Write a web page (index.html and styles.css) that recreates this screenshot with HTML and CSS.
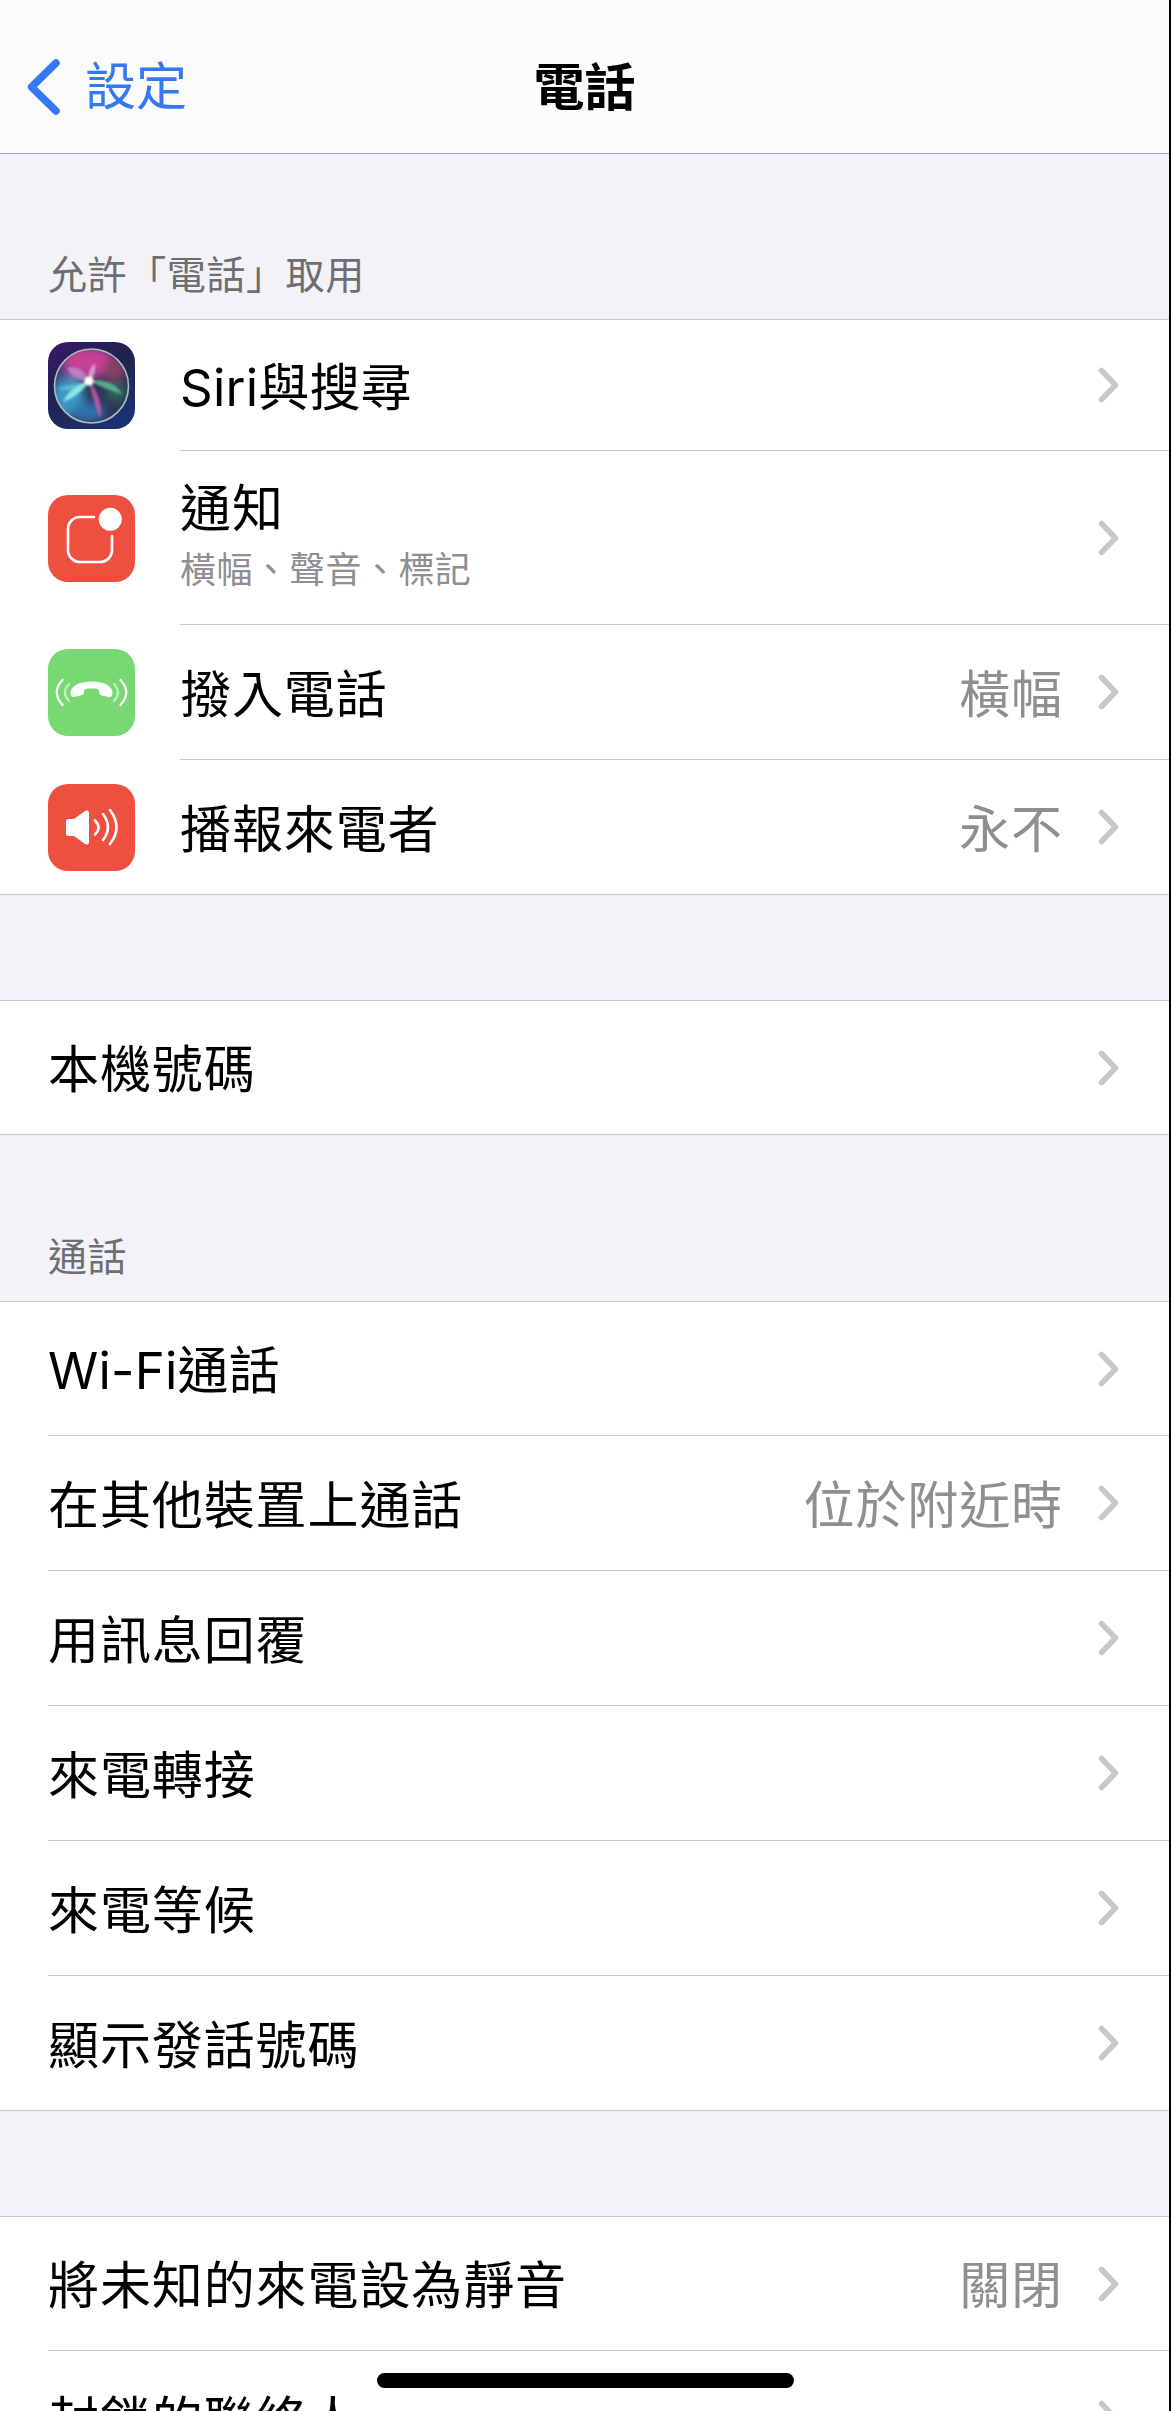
FILE: index.html
```html
<!DOCTYPE html>
<html lang="zh-Hant">
<head>
    <meta charset="UTF-8">
    <meta name="viewport" content="width=device-width, initial-scale=1.0">
    <title>電話</title>
    <link rel="stylesheet" href="styles.css">
</head>
<body>

<svg class="sprite" width="0" height="0">
    <symbol id="chevron" viewBox="0 0 21 36">
        <polyline points="3.5,3.5 17.5,18 3.5,32.5" fill="none" stroke="#c7c7cc" stroke-width="5.5" stroke-linecap="round" stroke-linejoin="round"/>
    </symbol>
</svg>

<div class="screen">
    <header class="nav">
        <a class="nav-back">
            <svg class="nav-chevron" viewBox="0 0 33 56"><polyline points="29,4 4.5,28 29,52" fill="none" stroke="#3478f6" stroke-width="7.5" stroke-linecap="round" stroke-linejoin="round"/></svg>
            <span>設定</span>
        </a>
        <h1 class="nav-title">電話</h1>
    </header>

    <div class="section-head">允許「電話」取用</div>
    <div class="group">
        <div class="row row-short">
            <svg class="row-icon" viewBox="0 0 87 87">
                <defs>
                    <linearGradient id="siriBg" x1="0" y1="0" x2="0.6" y2="1">
                        <stop offset="0" stop-color="#3b1768"/>
                        <stop offset="0.5" stop-color="#1d2350"/>
                        <stop offset="1" stop-color="#1f3070"/>
                    </linearGradient>
                    <filter id="siriBlur" x="-30%" y="-30%" width="160%" height="160%"><feGaussianBlur stdDeviation="5"/></filter>
                    <filter id="siriSoft" x="-30%" y="-30%" width="160%" height="160%"><feGaussianBlur stdDeviation="1.1"/></filter>
                    <clipPath id="siriDisc"><circle cx="43.5" cy="44" r="37"/></clipPath>
                </defs>
                <rect width="87" height="87" rx="20" fill="url(#siriBg)"/>
                <circle cx="43.5" cy="44" r="37" fill="#2b3557"/>
                <g clip-path="url(#siriDisc)" filter="url(#siriBlur)">
                    <ellipse cx="40" cy="20" rx="26" ry="16" fill="#c63f96"/>
                    <ellipse cx="66" cy="28" rx="12" ry="11" fill="#8a4060"/>
                    <ellipse cx="20" cy="54" rx="16" ry="21" fill="#3c98c4"/>
                    <ellipse cx="40" cy="70" rx="17" ry="10" fill="#3170ad"/>
                    <ellipse cx="68" cy="50" rx="10" ry="9" fill="#2f6a58"/>
                    <ellipse cx="14" cy="32" rx="6" ry="9" fill="#4a3f88"/>
                </g>
                <circle cx="43.5" cy="44" r="37" fill="none" stroke="#a9c0bd" stroke-width="1.6"/>
                <g filter="url(#siriSoft)">
                    <path d="M41 40 C30 38 23 34 19 26 C30 23 39 30 41 40Z" fill="#c49ad8" opacity="0.65"/>
                    <path d="M40 41 C28 41 18 42 9 47 C20 50 32 47 40 41Z" fill="#5ad0d8" opacity="0.6"/>
                    <path d="M41 39 C37 47 28 55 15 60 C20 49 30 42 41 39Z" fill="#8ff0e8" opacity="0.9"/>
                    <path d="M41 39 C46 36 48 30 47 21 C42 26 39 32 41 39Z" fill="#e0b0e0" opacity="0.8"/>
                    <path d="M41 39 C50 43 62 49 74 52 C68 41 54 36 41 39Z" fill="#5fbf95" opacity="0.8"/>
                    <path d="M41 40 C44 52 47 66 52 76 C55 64 50 48 41 40Z" fill="#cf5cab" opacity="0.8"/>
                    <circle cx="41" cy="39" r="4.5" fill="#ffffff"/>
                </g>
            </svg>
            <div class="row-body"><span class="row-label row-label-latin">Siri與搜尋</span><svg class="chevron"><use href="#chevron"/></svg></div>
        </div>
        <div class="row row-tall">
            <svg class="row-icon" viewBox="0 0 87 87">
                <rect width="87" height="87" rx="20" fill="#ee5040"/>
                <path d="M46 22 H32 a12 12 0 0 0 -12 12 V55 a12 12 0 0 0 12 12 H52 a12 12 0 0 0 12 -12 V41" fill="none" stroke="#fff" stroke-width="2.6" stroke-linecap="round"/>
                <circle cx="62.3" cy="24.3" r="11.5" fill="#fff"/>
            </svg>
            <div class="row-body">
                <div class="row-stack">
                    <span class="row-label">通知</span>
                    <span class="row-sub">橫幅、聲音、標記</span>
                </div>
                <svg class="chevron"><use href="#chevron"/></svg>
            </div>
        </div>
        <div class="row">
            <svg class="row-icon" viewBox="0 0 87 87">
                <rect width="87" height="87" rx="20" fill="#78d973"/>
                <path d="M22.5 44 C22 38 30 32.5 43.5 32.5 C57 32.5 65 38 64.5 44 C64.5 47 63 48.5 61 48 L54 46.5 C52 46 51 45 51 42 C51 40 49 39.5 43.5 39.5 C38 39.5 36 40 36 42 C36 45 35 46 33 46.5 L26 48 C24 48.5 22.5 47 22.5 44 Z" fill="#fff"/>
                <g fill="none" stroke="#fff" stroke-width="2.2" stroke-linecap="round">
                    <path d="M14.5 31 Q3 43.5 14.5 56"/>
                    <path d="M72.5 31 Q84 43.5 72.5 56"/>
                    <path d="M21 35 Q13 43.5 21 52" opacity="0.55"/>
                    <path d="M66 35 Q74 43.5 66 52" opacity="0.55"/>
                </g>
            </svg>
            <div class="row-body"><span class="row-label">撥入電話</span><span class="row-value">橫幅</span><svg class="chevron"><use href="#chevron"/></svg></div>
        </div>
        <div class="row row-end">
            <svg class="row-icon" viewBox="0 0 87 87">
                <rect width="87" height="87" rx="20" fill="#ee5040"/>
                <path d="M20 35 H26 L37 27 C39.5 26 41 27 41 29 V58 C41 60 39.5 61 37 60 L26 52 H20 C19 52 18 51 18 50 V37 C18 36 19 35 20 35 Z" fill="#fff"/>
                <g fill="none" stroke="#fff" stroke-width="2.6" stroke-linecap="round">
                    <path d="M47 36.5 Q54 43.5 47 50.5"/>
                    <path d="M55 30 Q65 43.5 55 56"/>
                    <path d="M62 26 Q75 43.5 62 60"/>
                </g>
            </svg>
            <div class="row-body"><span class="row-label">播報來電者</span><span class="row-value">永不</span><svg class="chevron"><use href="#chevron"/></svg></div>
        </div>
    </div>

    <div class="section-gap"></div>
    <div class="group">
        <div class="row row-single row-end row-plain">
            <div class="row-body"><span class="row-label">本機號碼</span><svg class="chevron"><use href="#chevron"/></svg></div>
        </div>
    </div>

    <div class="section-head section-head-tall">通話</div>
    <div class="group">
        <div class="row row-start row-plain">
            <div class="row-body"><span class="row-label row-label-latin">Wi-Fi通話</span><svg class="chevron"><use href="#chevron"/></svg></div>
        </div>
        <div class="row row-plain">
            <div class="row-body"><span class="row-label">在其他裝置上通話</span><span class="row-value">位於附近時</span><svg class="chevron"><use href="#chevron"/></svg></div>
        </div>
        <div class="row row-plain">
            <div class="row-body"><span class="row-label">用訊息回覆</span><svg class="chevron"><use href="#chevron"/></svg></div>
        </div>
        <div class="row row-plain">
            <div class="row-body"><span class="row-label">來電轉接</span><svg class="chevron"><use href="#chevron"/></svg></div>
        </div>
        <div class="row row-plain">
            <div class="row-body"><span class="row-label">來電等候</span><svg class="chevron"><use href="#chevron"/></svg></div>
        </div>
        <div class="row row-end row-plain">
            <div class="row-body"><span class="row-label">顯示發話號碼</span><svg class="chevron"><use href="#chevron"/></svg></div>
        </div>
    </div>

    <div class="section-gap"></div>
    <div class="group">
        <div class="row row-start row-plain">
            <div class="row-body"><span class="row-label">將未知的來電設為靜音</span><span class="row-value">關閉</span><svg class="chevron"><use href="#chevron"/></svg></div>
        </div>
        <div class="row row-end row-plain">
            <div class="row-body"><span class="row-label">封鎖的聯絡人</span><svg class="chevron"><use href="#chevron"/></svg></div>
        </div>
    </div>

    <div class="home-bar"></div>
</div>

</body>
</html>
```

FILE: styles.css
```css
body {
    margin: 0;
    font-family: Inter, "Noto Sans CJK TC", sans-serif;
    background-color: #000;
}
.sprite {
    display: block;
    height: 0;
}
.screen {
    position: relative;
    box-sizing: border-box;
    width: 1171px;
    height: 2411px;
    overflow: hidden;
    background-color: #f2f2f7;
    border-right: 2px solid #000;
}
.nav {
    display: flex;
    justify-content: center;
    align-items: center;
    position: relative;
    height: 153px;
    background-color: #fbfbfc;
    border-bottom: 1px solid #a6a6aa;
}
.nav-back {
    position: absolute;
    left: 27px;
    top: 59px;
    display: flex;
    align-items: center;
    gap: 25px;
    color: #3478f6;
    font-size: 51px;
    line-height: 56px;
}
.nav-chevron {
    width: 33px;
    height: 56px;
}
.nav-title {
    margin: 0;
    padding-top: 23px;
    color: #000;
    font-size: 51px;
    font-weight: 700;
    line-height: 56px;
}
.section-head {
    box-sizing: border-box;
    display: flex;
    align-items: flex-end;
    height: 165px;
    padding: 0 48px 24px;
    color: #6d6d72;
    font-size: 39px;
    line-height: 40px;
    letter-spacing: 0.6px;
}
.section-head-tall {
    height: 166px;
}
.section-gap {
    height: 105px;
}
.group {
    background-color: #fff;
    border-top: 1px solid #c8c7cc;
    border-bottom: 1px solid #c8c7cc;
}
.row {
    display: flex;
    align-items: center;
    height: 135px;
}
.row-short {
    height: 131px;
}
.row-tall {
    height: 174px;
}
.row-start,
.row-end {
    height: 134px;
}
.row-single {
    height: 133px;
}
.row-icon {
    flex: none;
    width: 87px;
    height: 87px;
    margin: 0 45px 0 48px;
}
.row-plain .row-body {
    margin-left: 48px;
}
.row-body {
    box-sizing: border-box;
    flex: 1;
    display: flex;
    align-items: center;
    align-self: stretch;
    padding-right: 50px;
    border-bottom: 1px solid #c8c7cc;
}
.row-end .row-body {
    border-bottom: none;
}
.row-label {
    flex: 1;
    padding-top: 5px;
    color: #000;
    font-size: 51px;
    line-height: 60px;
    letter-spacing: 0.9px;
}
.row-label-latin {
    letter-spacing: 0.2px;
}
.row-stack {
    flex: 1;
    display: flex;
    flex-direction: column;
    gap: 9px;
    padding-bottom: 5px;
}
.row-stack .row-label {
    flex: none;
    padding-top: 1px;
}
.row-sub {
    color: #8e8e93;
    font-size: 36px;
    line-height: 44px;
    letter-spacing: 0.4px;
}
.row-value {
    margin-right: 35px;
    padding-top: 5px;
    color: #8e8e93;
    font-size: 51px;
    line-height: 60px;
    letter-spacing: 0.9px;
}
.chevron {
    flex: none;
    width: 21px;
    height: 36px;
}
.home-bar {
    position: absolute;
    left: 377px;
    top: 2373px;
    width: 417px;
    height: 15px;
    background-color: #000;
    border-radius: 8px;
}
```
